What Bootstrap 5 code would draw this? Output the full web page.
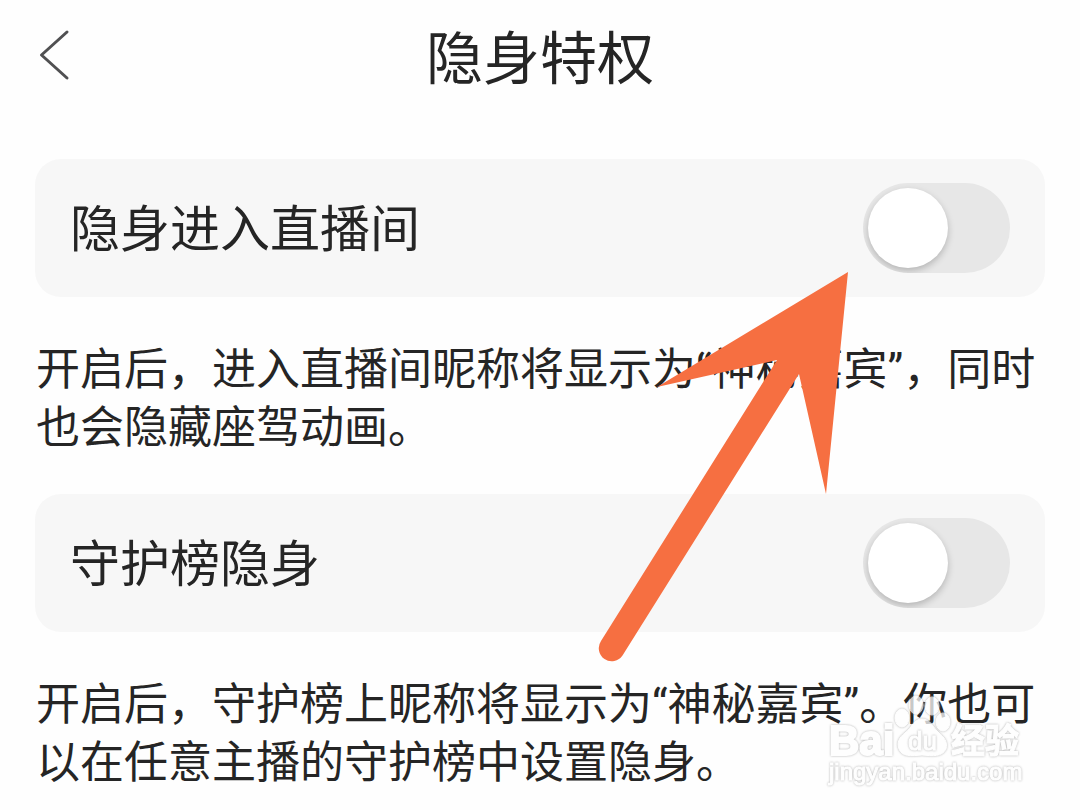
<!DOCTYPE html>
<html lang="zh-CN">
<head>
<meta charset="utf-8">
<meta name="viewport" content="width=device-width, initial-scale=1">
<title>隐身特权</title>
<link href="https://cdn.jsdelivr.net/npm/bootstrap@5.3.0/dist/css/bootstrap.min.css" rel="stylesheet">
<style>
body { background: #fefefe; color: #252525; font-family: Roboto, "Noto Sans CJK SC", sans-serif; }
.page-body { padding: 39px 35px 0; }
.top-bar { height: 120px; }
.back-btn { left: 35px; top: 28px; line-height: 0; }
.page-title { font-size: 57px; line-height: 80px; font-weight: 400; }
.setting-row { background: #f7f7f7; border-radius: 26px; min-height: 138px; padding: 24px 35px; }
.setting-label { font-size: 50px; line-height: 72px; padding-top: 4px; }
.setting-note { font-size: 44px; line-height: 58px; margin: 44px 0 37px; padding-left: 1px; }
.toggle.form-check-input { width: 147px; height: 90px; margin: 0; border: 0; border-radius: 45px; background: #e7e7e7; overflow: hidden; float: none; }
.toggle::before { content: ""; display: block; width: 80px; height: 80px; margin: 5px; border-radius: 50%; background: #fff; box-shadow: 0 3px 7px rgba(0,0,0,.22); }
.toggle:checked { background: #f66f41; }
.toggle:checked::before { margin-left: 62px; }
.pointer-arrow { right: 196px; top: 112px; pointer-events: none; z-index: 2; }
.watermark { right: 19px; bottom: 0; pointer-events: none; }
.watermark g { filter: drop-shadow(0 0 1px #999); opacity: .75; }
</style>
</head>
<body>
<header class="top-bar position-relative d-flex justify-content-center align-items-center">
  <button type="button" class="back-btn btn p-0 border-0 position-absolute" aria-label="返回">
    <svg width="38" height="54" viewBox="0 0 38 54" fill="none" stroke="#505052" stroke-width="3" stroke-linecap="round" stroke-linejoin="round"><path d="M32 4 6.500 27 32 50"/></svg>
  </button>
  <h1 class="page-title m-0">隐身特权</h1>
</header>
<main class="page-body">
  <section class="position-relative">
    <div class="setting-row d-flex align-items-center justify-content-between">
      <label class="setting-label" for="hideEnter">隐身进入直播间</label>
      <input class="toggle form-check-input" type="checkbox" role="switch" id="hideEnter">
    </div>
    <p class="setting-note">开启后，进入直播间昵称将显示为“神秘嘉宾”，同时也会隐藏座驾动画。</p>
    <svg class="pointer-arrow position-absolute" width="194" height="392" viewBox="655 271 194 392" overflow="visible" fill="#f66f41" aria-hidden="true">
      <path d="M848 272 657 387 777 360 601 641A12.500 12.500 0 0 0 622.500 655.500L799 374 826 494Z"/>
    </svg>
  </section>
  <section class="position-relative">
    <div class="setting-row d-flex align-items-center justify-content-between">
      <label class="setting-label" for="hideRank">守护榜隐身</label>
      <input class="toggle form-check-input" type="checkbox" role="switch" id="hideRank">
    </div>
    <p class="setting-note mb-0">开启后，守护榜上昵称将显示为“神秘嘉宾”。你也可以在任意主播的守护榜中设置隐身。</p>
    <svg class="watermark position-absolute" width="200" height="96" viewBox="826 696 200 96" overflow="visible" fill="#fff" stroke="#fff" stroke-width="1" aria-hidden="true">
      <g>
        <text x="829" y="755" font-family="Liberation Sans" font-weight="700" font-size="42" stroke-width="2">Bai</text>
        <ellipse cx="902" cy="718" rx="7" ry="9"/><ellipse cx="916" cy="705" rx="7" ry="9"/><ellipse cx="932" cy="706" rx="7" ry="9"/><ellipse cx="943" cy="722" rx="7" ry="9"/>
        <path d="M922 719C913 719 912 728 905 733C898 738 897 744 899 749C902 757 911 756 922 755C933 756 942 757 946 749C948 742 944 737 939 733C933 728 931 719 922 719Z"/>
        <text x="951" y="753" font-family="Noto Sans CJK SC" font-weight="700" font-size="34">经验</text>
        <text x="829" y="780" font-family="Liberation Sans" font-size="24">jingyan.baidu.com</text>
      </g>
      <g><text x="908" y="750" font-family="Liberation Sans" font-size="26">du</text></g>
    </svg>
  </section>
</main>
<script src="https://cdn.jsdelivr.net/npm/bootstrap@5.3.0/dist/js/bootstrap.bundle.min.js"></script>
</body>
</html>
